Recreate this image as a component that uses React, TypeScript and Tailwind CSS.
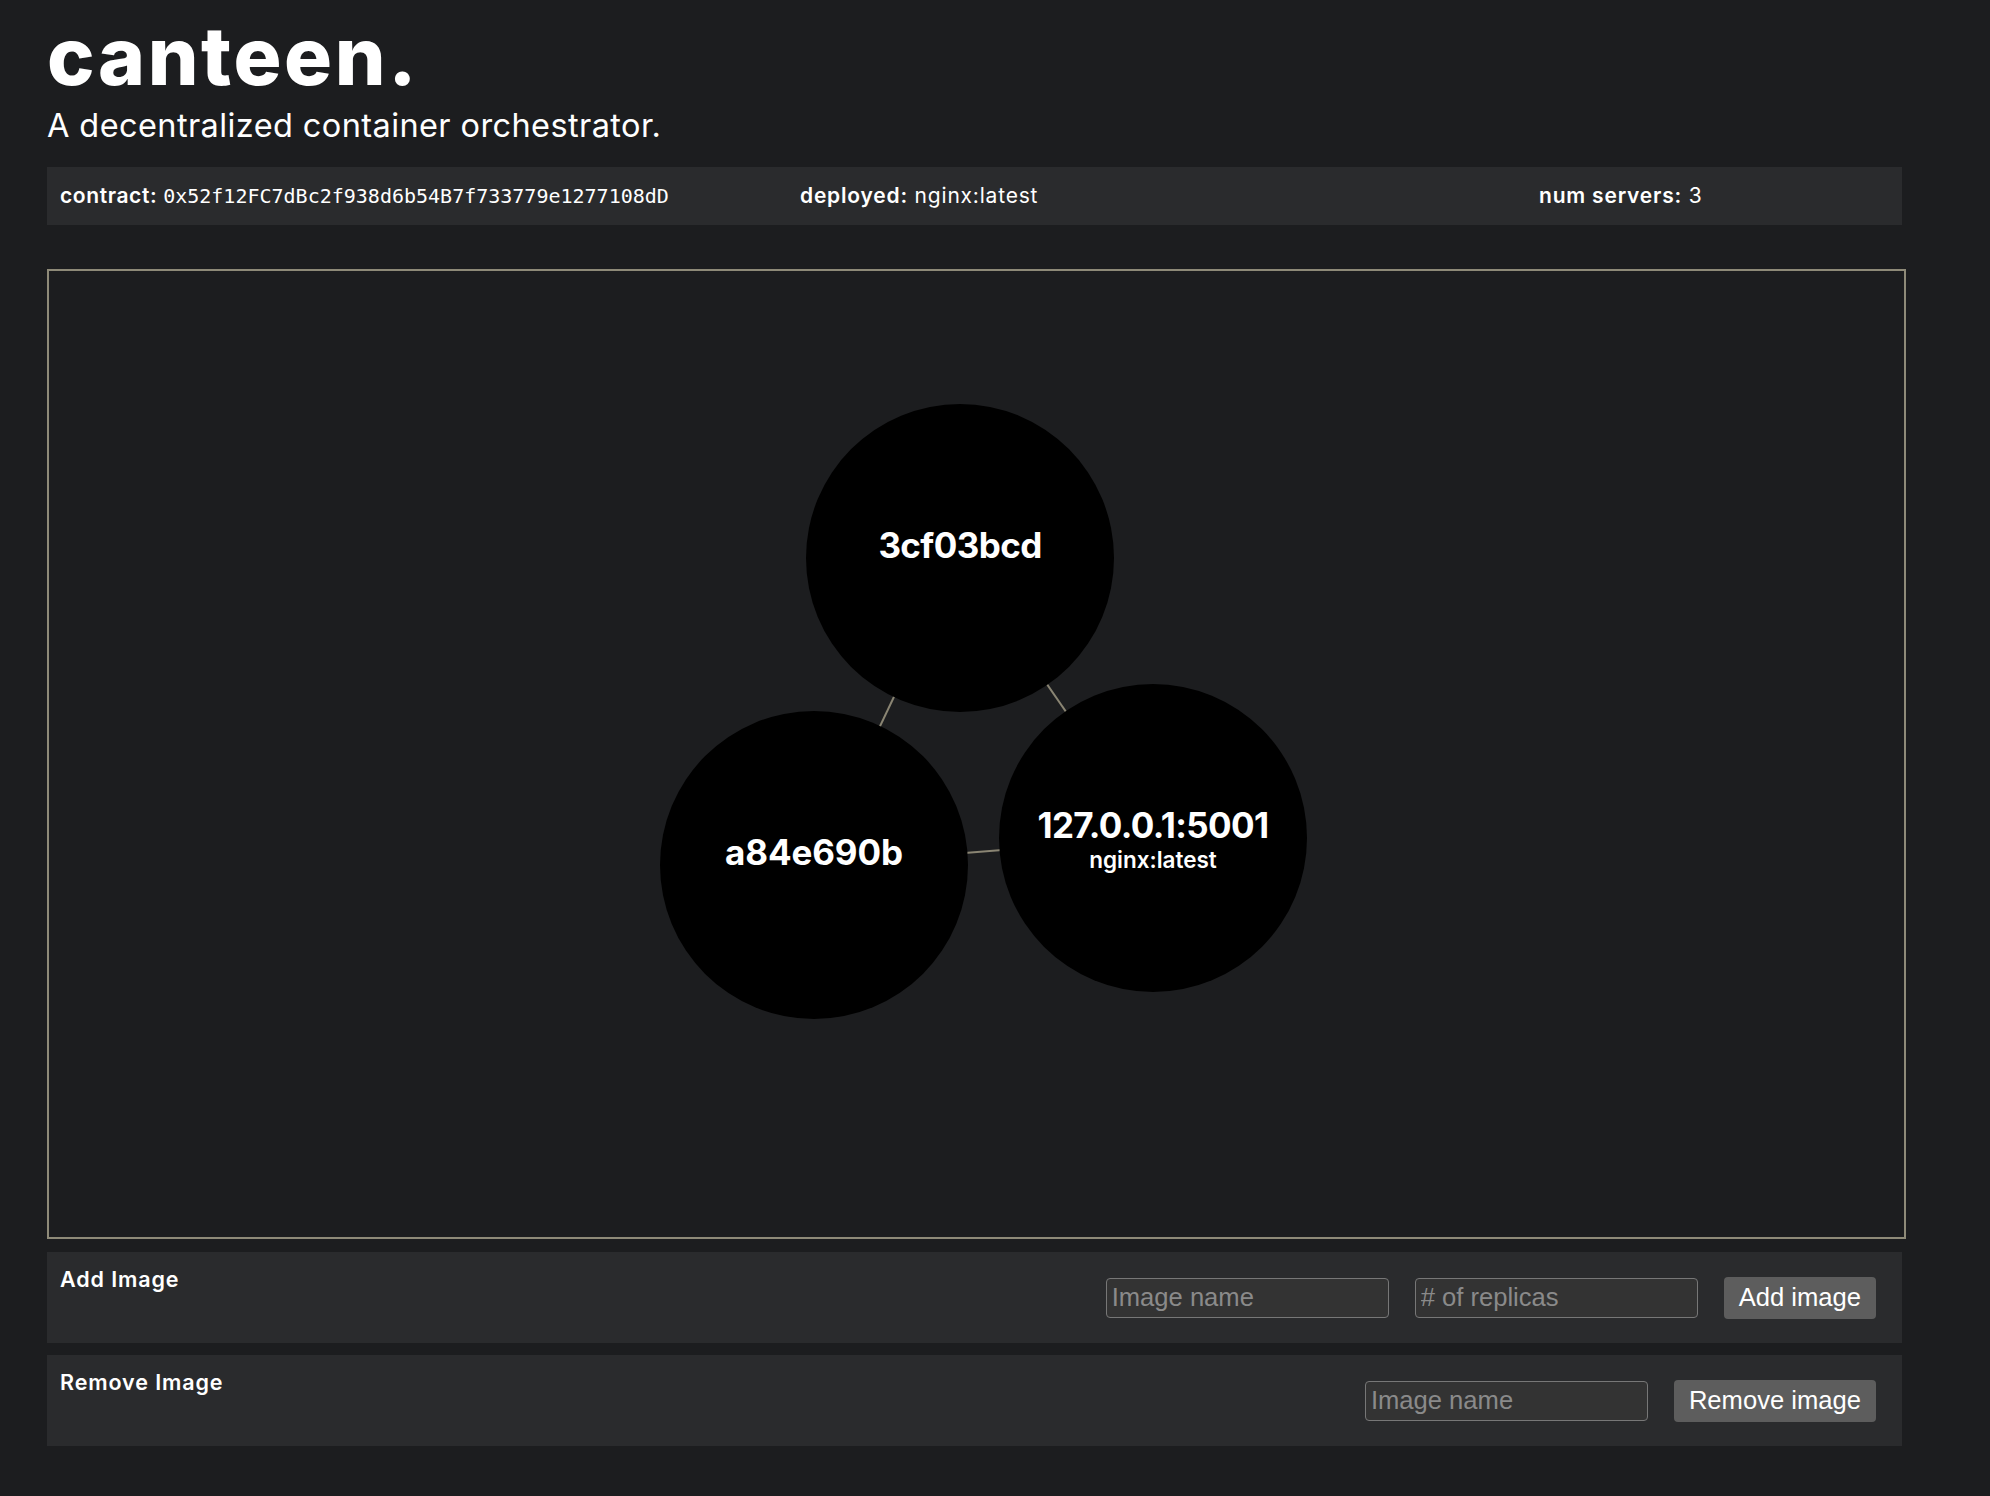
import React from "react";

const nodes = [
  { id: "3cf03bcd", cx: 911, cy: 287, sub: "" },
  { id: "a84e690b", cx: 765, cy: 594, sub: "" },
  { id: "127.0.0.1:5001", cx: 1104, cy: 567, sub: "nginx:latest" },
];

const edges: [number, number][] = [
  [0, 1],
  [0, 2],
  [1, 2],
];

function Graph() {
  return (
    <div className="mt-[44px] w-[1859px] h-[970px] border-2 border-[#8e8a78]">
      <svg width="1855" height="966" viewBox="0 0 1855 966" className="block">
        {edges.map(([a, b], i) => (
          <line
            key={i}
            x1={nodes[a].cx}
            y1={nodes[a].cy}
            x2={nodes[b].cx}
            y2={nodes[b].cy}
            stroke="#8a8573"
            strokeWidth={2}
          />
        ))}
        {nodes.map((n) => (
          <g key={n.id}>
            <circle cx={n.cx} cy={n.cy} r={154} fill="#000000" />
            <text
              x={n.cx}
              y={n.cy}
              textAnchor="middle"
              fill="#ffffff"
              fontFamily="Inter, sans-serif"
              fontWeight={700}
              fontSize={35}
              letterSpacing={n.id === "a84e690b" ? -0.1 : -0.6}
            >
              {n.id}
            </text>
            {n.sub && (
              <text
                x={n.cx}
                y={n.cy + 30}
                textAnchor="middle"
                fill="#ffffff"
                fontFamily="Inter, sans-serif"
                fontWeight={600}
                fontSize={22.5}
              >
                {n.sub}
              </text>
            )}
          </g>
        ))}
      </svg>
    </div>
  );
}

function Input({ placeholder }: { placeholder: string }) {
  return (
    <input
      placeholder={placeholder}
      className="w-[283px] h-[40px] rounded-[4px] border-[1.5px] border-[#777777] bg-[#333333] px-[5px] text-[25.6px] text-white placeholder:text-[#8a8a8a] outline-none"
      style={{ fontFamily: '"Liberation Sans", Arial, sans-serif' }}
    />
  );
}

function Button({ label }: { label: string }) {
  return (
    <button
      className="h-[42px] rounded-[4px] bg-[#5d5d5d] px-[15px] text-[25.6px] text-white"
      style={{ fontFamily: '"Liberation Sans", Arial, sans-serif' }}
    >
      {label}
    </button>
  );
}

function Panel({ title, children }: { title: string; children: React.ReactNode }) {
  return (
    <div className="w-[1855px] h-[91px] bg-[#2a2b2d] flex items-start justify-between pl-[13px] pr-[26px]">
      <div className="pt-[15px] text-[21.5px] leading-[25px] font-semibold tracking-[0.9px] text-white">{title}</div>
      <div className="h-full flex items-center gap-[26px]">{children}</div>
    </div>
  );
}

export default function App() {
  return (
    <div
      className="min-h-screen bg-[#1c1d1f] text-white pl-[47px] pb-[50px]"
      style={{ fontFamily: "Inter, sans-serif" }}
    >
      <h1 className="pt-[16px] text-[80px] leading-[80px] font-extrabold tracking-[2.6px] text-white">canteen.</h1>
      <p className="mt-[13px] text-[32.5px] leading-[33px] font-normal tracking-[0.4px] text-white">
        A decentralized container orchestrator.
      </p>
      <div className="mt-[25px] w-[1855px] h-[58px] bg-[#2a2b2d] grid grid-cols-[740px_739px_1fr] items-center pl-[13px] text-[21px] text-white">
        <div className="whitespace-nowrap">
          <span className="font-semibold tracking-[0.6px]">contract:</span>{" "}
          <span className="text-[20px]" style={{ fontFamily: '"DejaVu Sans Mono", monospace' }}>
            0x52f12FC7dBc2f938d6b54B7f733779e1277108dD
          </span>
        </div>
        <div className="whitespace-nowrap tracking-[0.8px]">
          <span className="font-semibold">deployed:</span> nginx:latest
        </div>
        <div className="whitespace-nowrap tracking-[0.8px]">
          <span className="font-semibold">num servers:</span> 3
        </div>
      </div>
      <Graph />
      <div className="mt-[13px] flex flex-col gap-[12px]">
        <Panel title="Add Image">
          <Input placeholder="Image name" />
          <Input placeholder="# of replicas" />
          <Button label="Add image" />
        </Panel>
        <Panel title="Remove Image">
          <Input placeholder="Image name" />
          <Button label="Remove image" />
        </Panel>
      </div>
    </div>
  );
}
